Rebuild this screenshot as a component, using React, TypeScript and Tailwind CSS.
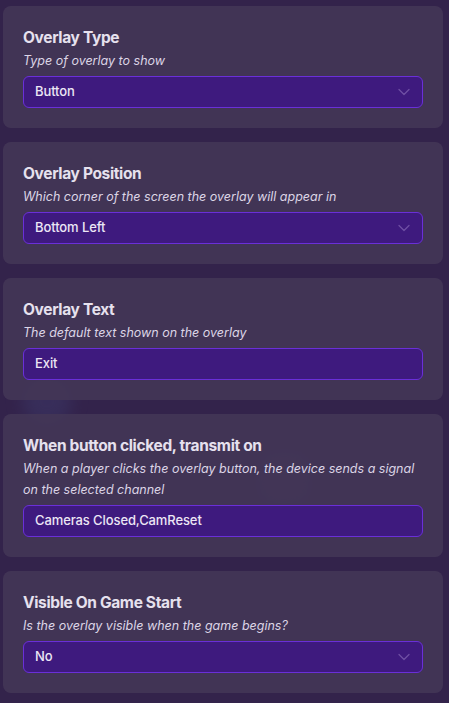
import React from "react";

type Field = {
  title: string;
  desc: string;
  value: string;
  select: boolean;
};

const fields: Field[] = [
  { title: "Overlay Type", desc: "Type of overlay to show", value: "Button", select: true },
  { title: "Overlay Position", desc: "Which corner of the screen the overlay will appear in", value: "Bottom Left", select: true },
  { title: "Overlay Text", desc: "The default text shown on the overlay", value: "Exit", select: false },
  {
    title: "When button clicked, transmit on",
    desc: "When a player clicks the overlay button, the device sends a signal on the selected channel",
    value: "Cameras Closed,CamReset",
    select: false,
  },
  { title: "Visible On Game Start", desc: "Is the overlay visible when the game begins?", value: "No", select: true },
];

function Chevron() {
  return (
    <svg width="12" height="8" viewBox="0 0 12 8" fill="none" className="shrink-0">
      <path d="M1 1.5 L6 6.5 L11 1.5" stroke="#6e4fa3" strokeWidth="1.3" strokeLinecap="round" strokeLinejoin="round" />
    </svg>
  );
}

export default function App() {
  return (
    <div
      className="relative min-h-[703px] w-full overflow-hidden bg-[#33234b] pt-[6px] pl-[3px] pr-[6px] pb-[10px]"
      style={{ fontFamily: "Inter, 'Noto Sans', sans-serif" }}
    >
      <div className="pointer-events-none absolute left-[22px] top-[376px] h-[50px] w-[50px] rounded-full bg-[#3b3564] opacity-60 blur-[8px]" />
      <div className="pointer-events-none absolute left-[258px] top-[452px] h-[52px] w-[52px] rounded-[16px] bg-[#3a3566] opacity-60 blur-[8px]" />
      <div className="relative flex flex-col gap-[14px]">
        {fields.map((f) => (
          <div key={f.title} className="rounded-[8px] bg-[#433656]/[0.93] px-[20px] pt-[20px] pb-[20px]">
            <div className="text-[15.5px] font-bold tracking-[-0.35px] leading-[24px] text-[#e6e1ee]">{f.title}</div>
            <div className="text-[12.5px] italic leading-[21px] text-[#dcd5e6]">{f.desc}</div>
            <div className="mt-[5px] flex h-[32px] items-center justify-between rounded-[6px] border border-[#6a2fd8] bg-[#3e1a7e] pl-[11px] pr-[12px]">
              <span className="text-[13px] font-medium tracking-[-0.1px] text-[#ece6f5]">{f.value}</span>
              {f.select && <Chevron />}
            </div>
          </div>
        ))}
      </div>
    </div>
  );
}
